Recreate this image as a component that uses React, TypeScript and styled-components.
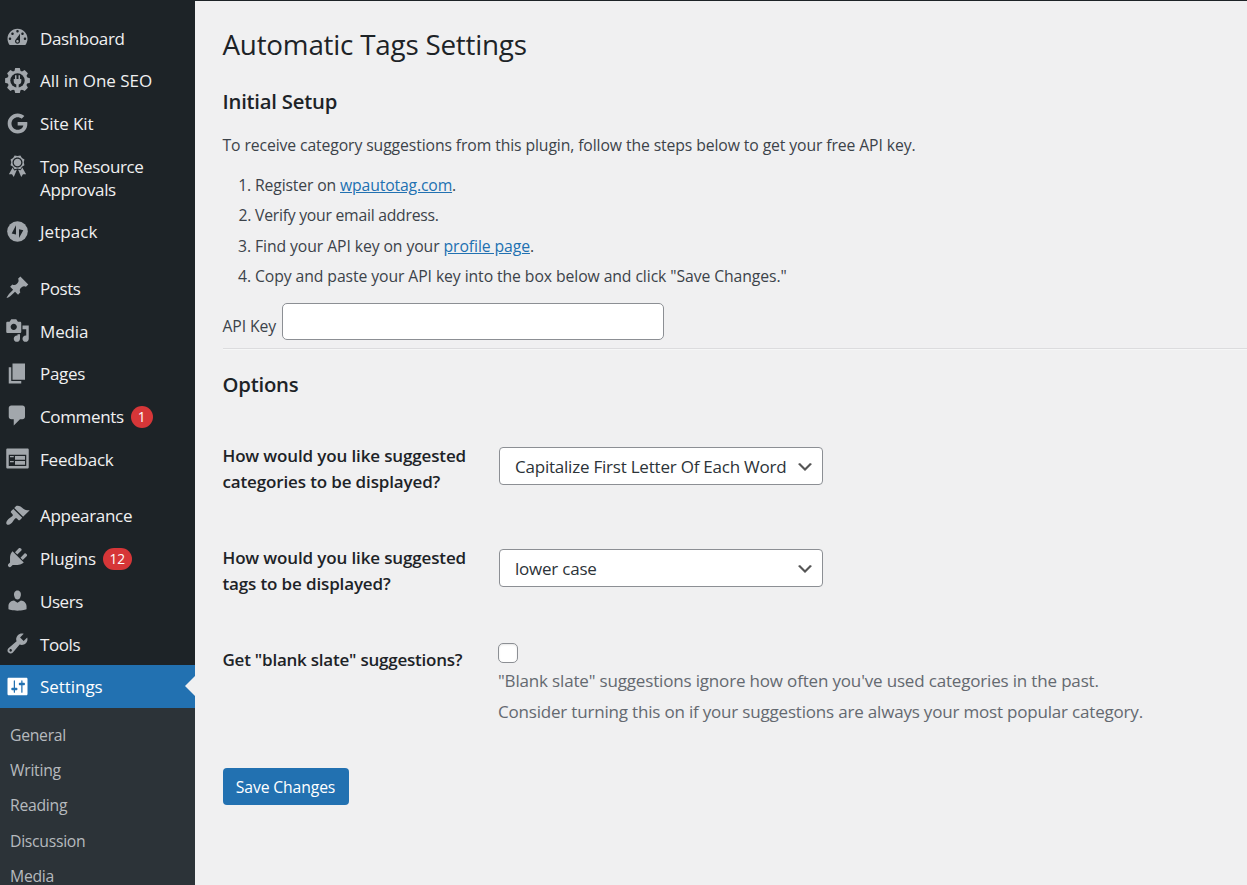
import React from "react";
import styled, { createGlobalStyle } from "styled-components";

const GlobalStyle = createGlobalStyle`
  * { box-sizing: border-box; }
  html, body { margin: 0; background: #f0f0f1; }
  body, input, select, button {
    font-family: "Segoe UI", "Open Sans", "Noto Sans", sans-serif;
  }
`;

const Page = styled.div`
  display: flex;
  height: 100vh;
  overflow: hidden;
  border-top: 1px solid #1d2327;
  background: #f0f0f1;
`;

/* ---------- sidebar ---------- */

const Sidebar = styled.nav`
  flex: 0 0 195px;
  background: #1d2327;
  padding-top: 15.25px;
`;

const MenuGroup = styled.ul`
  list-style: none;
  margin: 0 0 13.75px;
  padding: 0;

  &:last-of-type {
    margin-bottom: 0;
  }
`;

const MenuLink = styled.a<{ $current?: boolean }>`
  position: relative;
  display: flex;
  align-items: flex-start;
  min-height: 42.75px;
  padding-left: 5px;
  color: ${(p) => (p.$current ? "#fff" : "#f0f0f1")};
  background: ${(p) => (p.$current ? "#2271b1" : "transparent")};
  text-decoration: none;
`;

const CurrentArrow = styled.span`
  position: absolute;
  right: 0;
  top: 10.75px;
  border: solid transparent;
  border-width: 10px 10px 10px 0;
  border-right-color: #f0f0f1;
`;

const MenuIcon = styled.svg<{ $current?: boolean }>`
  flex: none;
  width: 25px;
  height: 25px;
  margin-top: 8.75px;
  fill: ${(p) => (p.$current ? "#fff" : "#a2a7ac")};
`;

const MenuLabel = styled.span<{ $tracking: number }>`
  max-width: 125px;
  padding: 11.4px 0 8.6px 10px;
  font-size: 17px;
  line-height: 22.75px;
  letter-spacing: ${(p) => p.$tracking}px;
`;

const Badge = styled.span`
  min-width: 22px;
  height: 22px;
  margin: 11px 0 0 7px;
  padding: 0 6.5px;
  border-radius: 11px;
  background: #d63638;
  color: #fff;
  font-size: 13.75px;
  line-height: 22px;
  text-align: center;
`;

const Submenu = styled.div`
  padding: 8.75px 0;
  background: #2c3338;
`;

const SubmenuItem = styled.a`
  display: block;
  padding: 7.5px 10px 5px;
  font-size: 15.75px;
  line-height: 22.75px;
  letter-spacing: -0.28px;
  color: #b6babe;
`;

/* ---------- content ---------- */

const Content = styled.main`
  flex: 1;
  min-width: 0;
  padding: 24px 0 0 27.5px;
  color: #3c434a;
  font-size: 15.75px;
  letter-spacing: -0.11px;
`;

const PageTitle = styled.h1`
  margin: 0;
  font-size: 27.8px;
  font-weight: 400;
  line-height: 38px;
  letter-spacing: -0.22px;
  color: #1d2327;
`;

const SectionTitle = styled.h2<{ $gap: number }>`
  margin: ${(p) => p.$gap}px 0 0;
  font-size: 20.3px;
  font-weight: 600;
  line-height: 26px;
  letter-spacing: -0.22px;
  color: #1d2327;
`;

const Intro = styled.p`
  margin: 19px 0 16px;
  line-height: 24px;
`;

const Steps = styled.ol`
  display: flex;
  flex-direction: column;
  gap: 6px;
  margin: 0;
  padding-left: 32.5px;
  line-height: 24.375px;
`;

const Step = styled.li<{ $tracking: number }>`
  letter-spacing: ${(p) => p.$tracking}px;
`;

const Link = styled.a`
  color: #2271b1;
  text-decoration: underline;
`;

const KeyRow = styled.div`
  display: flex;
  gap: 5px;
  margin-top: 14.5px;
`;

const KeyLabel = styled.label`
  width: 54.5px;
  padding-top: 11px;
  line-height: 24px;
  white-space: nowrap;
`;

const KeyInput = styled.input`
  width: 382px;
  height: 37px;
  border: 1px solid #8c8f94;
  border-radius: 5px;
  background: #fff;
  font-size: 16px;
`;

const Divider = styled.hr`
  margin: 8px 0 0;
  border: 0;
  border-top: 1px solid #dcdcde;
  border-bottom: 1px solid #f6f7f7;
`;

const Form = styled.div`
  display: flex;
  flex-direction: column;
  gap: 50px;
  margin-top: 45.5px;
`;

const FormRow = styled.div`
  display: grid;
  grid-template-columns: 275.5px 1fr;
  min-height: 52px;
`;

const FieldLabel = styled.label<{ $tracking: number }>`
  max-width: 250px;
  padding-top: 1px;
  font-size: 17px;
  font-weight: 600;
  line-height: 26px;
  height: 52px;
  letter-spacing: ${(p) => p.$tracking}px;
  color: #1d2327;
`;

const SelectBox = styled.div`
  position: relative;
  width: 324px;
  height: 38px;
  margin: 5px 0 0 1px;
`;

const Select = styled.select`
  appearance: none;
  width: 100%;
  height: 100%;
  padding: 1px 30px 0 15px;
  border: 1px solid #8c8f94;
  border-radius: 4px;
  background: #fff;
  color: #2c3338;
  font-size: 17px;
  letter-spacing: -0.22px;
`;

const Chevron = styled.svg`
  position: absolute;
  right: 8px;
  top: 10px;
  width: 20px;
  height: 20px;
  fill: #555;
  pointer-events: none;
`;

const CheckCell = styled.div`
  margin-top: -3px;
`;

const Checkbox = styled.input`
  appearance: none;
  display: block;
  width: 20px;
  height: 20px;
  margin: 0 0 2px;
  border: 1px solid #8c8f94;
  border-radius: 5px;
  background: #fff;
  box-shadow: inset 0 1px 2px rgba(0, 0, 0, 0.1);
`;

const Hint = styled.p<{ $tracking: number }>`
  margin: 0;
  font-size: 17px;
  line-height: 31px;
  letter-spacing: ${(p) => p.$tracking}px;
  color: #646970;
  white-space: nowrap;
`;

const SaveButton = styled.button`
  display: block;
  width: 126px;
  height: 37px;
  margin-top: 41px;
  padding: 1px 0 0;
  border: 0;
  border-radius: 4px;
  background: #2271b1;
  color: #fff;
  font-size: 15.75px;
  letter-spacing: -0.14px;
`;

/* ---------- icons ---------- */

const glyphs: Record<string, string> = {
  dashboard:
    "M3.76 16h12.48c1.1-1.37 1.76-3.11 1.76-5 0-4.42-3.58-8-8-8s-8 3.58-8 8c0 1.89.66 3.63 1.76 5zM10 4c.55 0 1 .45 1 1s-.45 1-1 1-1-.45-1-1 .45-1 1-1zM6 6c.55 0 1 .45 1 1s-.45 1-1 1-1-.45-1-1 .45-1 1-1zm8 0c.55 0 1 .45 1 1s-.45 1-1 1-1-.45-1-1 .45-1 1-1zm-5.37 5.55L12 7v6c0 1.1-.9 2-2 2s-2-.9-2-2c0-.57.24-1.08.63-1.45zM4 10c.55 0 1 .45 1 1s-.45 1-1 1-1-.45-1-1 .45-1 1-1zm12 0c.55 0 1 .45 1 1s-.45 1-1 1-1-.45-1-1 .45-1 1-1zm-5 3c0-.55-.45-1-1-1s-1 .45-1 1 .45 1 1 1 1-.45 1-1z",
  awards:
    "M4.46 5.16L5 7.46l-.54 2.29 2.01 1.24L7.7 13l2.3-.54 2.3.54 1.23-2.01 2.01-1.24L15 7.46l.54-2.3-2-1.24-1.24-2.01-2.3.55-2.29-.54-1.25 2zm5.55 6.34c-2.21 0-4-1.79-4-4 0-2.2 1.79-4 4-4 2.2 0 4 1.8 4 4 0 2.21-1.8 4-4 4zm-.02-1C8.33 10.5 7 9.16 7 7.5c0-1.65 1.33-3 2.99-3S13 5.85 13 7.5c0 1.66-1.35 3-3.01 3zm3.84 1.1l-1.28 2.24-2.08-.47L13 19.2l1.4-2.2h2.5zm-7.7.07l1.25 2.25 2.13-.51L7 19.2 5.6 17H3.1z",
  post: "M10.44 3.02l1.82-1.82 6.36 6.35-1.83 1.82c-1.05-.68-2.48-.57-3.41.36l-.75.75c-.92.93-1.04 2.35-.35 3.41l-1.83 1.82-2.41-2.41-2.8 2.79c-.42.42-3.38 2.71-3.8 2.29s1.86-3.39 2.28-3.81l2.79-2.79L4.1 9.36l1.83-1.82c1.05.69 2.48.57 3.4-.36l.75-.75c.93-.92 1.05-2.35.36-3.41z",
  media:
    "M13 11V4c0-.55-.45-1-1-1h-1.67L9 1H5L3.67 3H2c-.55 0-1 .45-1 1v7c0 .55.45 1 1 1h10c.55 0 1-.45 1-1zM7 4.5c1.38 0 2.5 1.12 2.5 2.5S8.38 9.5 7 9.5 4.5 8.38 4.5 7 5.62 4.5 7 4.5zM14 6h5v10.5c0 1.38-1.12 2.5-2.5 2.5S14 17.88 14 16.5s1.12-2.5 2.5-2.5c.17 0 .34.02.5.05V9h-3V6zm-4 8.05V13h2v3.5c0 1.38-1.12 2.5-2.5 2.5S7 17.88 7 16.5 8.12 14 9.5 14c.17 0 .34.02.5.05z",
  page: "M6 15V2h10v13H6zm-1 1h8v2H3V5h2v11z",
  comments:
    "M5 2h9c1.1 0 2 .9 2 2v7c0 1.1-.9 2-2 2h-2l-5 5v-5H5c-1.1 0-2-.9-2-2V4c0-1.1.9-2 2-2z",
  feedback:
    "M2 2h16c.55 0 1 .45 1 1v14c0 .55-.45 1-1 1H2c-.55 0-1-.45-1-1V3c0-.55.45-1 1-1zm15 14V7H3v9h14zM4 8v1h3V8H4zm4 0v3h8V8H8zm-4 4v1h3v-1H4zm4 0v3h8v-3H8z",
  appearance:
    "M14.48 11.06L7.41 3.99l1.5-1.5c.5-.56 2.3-.47 3.51.32 1.21.8 1.43 1.28 2.91 2.1 1.18.64 2.45 1.26 4.45.85zm-.71.71L6.7 4.7 4.93 6.47c-.39.39-.39 1.02 0 1.41l1.06 1.06c.39.39.39 1.03 0 1.42-.6.6-1.43 1.11-2.21 1.69-.35.26-.7.53-1.01.84C1.43 14.23.4 16.08 1.4 17.07c.99 1 2.84-.03 4.18-1.36.31-.31.58-.66.85-1.02.57-.78 1.08-1.61 1.69-2.21.39-.39 1.02-.39 1.41 0l1.06 1.06c.39.39 1.02.39 1.41 0z",
  plugins:
    "M13.11 4.36L9.87 7.6 8 5.73l3.24-3.24c.35-.34 1.05-.2 1.56.32.52.51.66 1.21.31 1.55zm-8 1.77l.91-1.12 9.01 9.01-1.19.84c-.71.71-2.63 1.16-3.82 1.16H6.14L4.9 17.26c-.59.59-1.54.59-2.12 0-.59-.58-.59-1.53 0-2.12l1.24-1.24v-3.88c0-1.13.4-3.19 1.09-3.89zm7.26 3.97l3.24-3.24c.34-.35 1.04-.21 1.55.31.52.51.66 1.21.31 1.55l-3.24 3.25z",
  users:
    "M10 9.25c-2.27 0-2.73-3.44-2.73-3.44C7 4.02 7.82 2 9.97 2c2.16 0 2.98 2.02 2.71 3.81 0 0-.41 3.44-2.68 3.44zm0 2.57L12.72 10c2.39 0 4.52 2.33 4.52 4.53v2.49s-3.65 1.13-7.24 1.13c-3.65 0-7.24-1.13-7.24-1.13v-2.49c0-2.25 1.94-4.48 4.47-4.48z",
  tools:
    "M16.68 9.77c-1.34 1.34-3.3 1.67-4.95.99l-5.41 6.52c-.99.99-2.59.99-3.58 0s-.99-2.59 0-3.57l6.52-5.42c-.68-1.65-.35-3.61.99-4.95 1.28-1.28 3.12-1.62 4.72-1.06l-2.89 2.89 2.82 2.82 2.86-2.87c.53 1.58.18 3.39-1.08 4.65zM3.81 16.21c.4.39 1.04.39 1.43 0 .4-.4.4-1.04 0-1.43-.39-.4-1.03-.4-1.43 0-.39.39-.39 1.03 0 1.43z",
  settings:
    "M18 16V4c0-.55-.45-1-1-1H3c-.55 0-1 .45-1 1v12c0 .55.45 1 1 1h14c.55 0 1-.45 1-1zM8 11h1c.55 0 1 .45 1 1s-.45 1-1 1H8v1.5c0 .28-.22.5-.5.5s-.5-.22-.5-.5V13H6c-.55 0-1-.45-1-1s.45-1 1-1h1V5.5c0-.28.22-.5.5-.5s.5.22.5.5V11zm5-2h-1c-.55 0-1-.45-1-1s.45-1 1-1h1V5.5c0-.28.22-.5.5-.5s.5.22.5.5V7h1c.55 0 1 .45 1 1s-.45 1-1 1h-1v5.5c0 .28-.22.5-.5.5s-.5-.22-.5-.5V9z",
};

const Glyph = ({ name, current }: { name: string; current?: boolean }) => {
  if (name === "gear") {
    return (
      <MenuIcon viewBox="-12.5 -12.5 25 25">
        {[0, 45, 90, 135].map((a) => (
          <path key={a} d="M-2.3-12.4h4.6l.9 3.4v18l-.9 3.4h-4.6l-.9-3.4v-18z" transform={`rotate(${a})`} />
        ))}
        <circle r="10.1" />
        <circle r="7.2" fill="#1d2327" />
        <path d="M-2.5-5.2h1.500v3.600h2v-3.600h1.500v3.600h1.300v2.400c0 1.800-1 2.900-2.600 3.300v3.600h-2.400v-3.600c-1.600-.4-2.600-1.500-2.600-3.300v-2.400h1.300z" />
      </MenuIcon>
    );
  }
  if (name === "google") {
    return (
      <MenuIcon viewBox="-66 -53 620 620">
        <path d="M488 261.8C488 403.3 391.1 504 248 504 110.8 504 0 393.2 0 256S110.8 8 248 8c66.8 0 123 24.5 166.3 64.9l-67.5 64.9C258.5 52.6 94.3 116.6 94.3 256c0 86.5 69.1 156.6 153.7 156.6 98.2 0 135-70.4 140.8-106.9H248v-85.3h236.1c2.3 12.7 3.9 24.9 3.9 41.4z" />
      </MenuIcon>
    );
  }
  if (name === "jetpack") {
    return (
      <MenuIcon viewBox="0 0 25 25">
        <circle cx="12.5" cy="12.5" r="10.3" />
        <path d="M11 6.2v9.4l-4.3-1zM14 18.9V10.200l4.300 1z" fill="#1d2327" />
      </MenuIcon>
    );
  }
  return (
    <MenuIcon viewBox="0 0 20 20" $current={current}>
      <path fillRule={name === "awards" ? "evenodd" : "nonzero"} d={glyphs[name]} />
    </MenuIcon>
  );
};

/* ---------- data ---------- */

type Item = { icon: string; label: string; tracking: number; badge?: string; current?: boolean };

const groups: Item[][] = [
  [
    { icon: "dashboard", label: "Dashboard", tracking: -0.35 },
    { icon: "gear", label: "All in One SEO", tracking: -0.02 },
    { icon: "google", label: "Site Kit", tracking: -0.12 },
    { icon: "awards", label: "Top Resource Approvals", tracking: -0.36 },
    { icon: "jetpack", label: "Jetpack", tracking: 0.05 },
  ],
  [
    { icon: "post", label: "Posts", tracking: -0.45 },
    { icon: "media", label: "Media", tracking: -0.15 },
    { icon: "page", label: "Pages", tracking: -0.3 },
    { icon: "comments", label: "Comments", tracking: -0.35, badge: "1" },
    { icon: "feedback", label: "Feedback", tracking: -0.2 },
  ],
  [
    { icon: "appearance", label: "Appearance", tracking: -0.28 },
    { icon: "plugins", label: "Plugins", tracking: -0.15, badge: "12" },
    { icon: "users", label: "Users", tracking: -0.45 },
    { icon: "tools", label: "Tools", tracking: -0.4 },
    { icon: "settings", label: "Settings", tracking: -0.05, current: true },
  ],
];

const submenu = ["General", "Writing", "Reading", "Discussion", "Media"];

const SelectField = ({ id, value }: { id: string; value: string }) => (
  <SelectBox>
    <Select id={id} defaultValue={value}>
      <option>{value}</option>
    </Select>
    <Chevron viewBox="0 0 20 20">
      <path d="M5 6l5 5 5-5 2 1-7 7-7-7 2-1z" />
    </Chevron>
  </SelectBox>
);

export default function App() {
  return (
    <>
      <GlobalStyle />
      <Page>
        <Sidebar>
          {groups.map((items, i) => (
            <MenuGroup key={i}>
              {items.map((item) => (
                <li key={item.label}>
                  <MenuLink $current={item.current}>
                    <Glyph name={item.icon} current={item.current} />
                    <MenuLabel $tracking={item.tracking}>{item.label}</MenuLabel>
                    {item.badge && <Badge>{item.badge}</Badge>}
                    {item.current && <CurrentArrow />}
                  </MenuLink>
                </li>
              ))}
            </MenuGroup>
          ))}
          <Submenu>
            {submenu.map((s) => (
              <SubmenuItem key={s}>{s}</SubmenuItem>
            ))}
          </Submenu>
        </Sidebar>
        <Content>
          <PageTitle>Automatic Tags Settings</PageTitle>
          <SectionTitle $gap={25}>Initial Setup</SectionTitle>
          <Intro>
            To receive category suggestions from this plugin, follow the steps below to get your free API key.
          </Intro>
          <Steps>
            <Step $tracking={-0.15}>
              Register on <Link>wpautotag.com</Link>.
            </Step>
            <Step $tracking={-0.25}>Verify your email address.</Step>
            <Step $tracking={-0.09}>
              Find your API key on your <Link>profile page</Link>.
            </Step>
            <Step $tracking={-0.09}>
              Copy and paste your API key into the box below and click "Save Changes."
            </Step>
          </Steps>
          <KeyRow>
            <KeyLabel htmlFor="api-key">API Key</KeyLabel>
            <KeyInput id="api-key" type="text" />
          </KeyRow>
          <Divider />
          <SectionTitle $gap={20.5}>Options</SectionTitle>
          <Form>
            <FormRow>
              <FieldLabel htmlFor="categories" $tracking={-0.14}>
                How would you like suggested categories to be displayed?
              </FieldLabel>
              <SelectField id="categories" value="Capitalize First Letter Of Each Word" />
            </FormRow>
            <FormRow>
              <FieldLabel htmlFor="tags" $tracking={-0.14}>
                How would you like suggested tags to be displayed?
              </FieldLabel>
              <SelectField id="tags" value="lower case" />
            </FormRow>
            <FormRow>
              <FieldLabel htmlFor="blank-slate" $tracking={-0.23}>
                Get "blank slate" suggestions?
              </FieldLabel>
              <CheckCell>
                <Checkbox id="blank-slate" type="checkbox" />
                <Hint $tracking={-0.17}>
                  "Blank slate" suggestions ignore how often you've used categories in the past.
                </Hint>
                <Hint $tracking={-0.19}>
                  Consider turning this on if your suggestions are always your most popular category.
                </Hint>
              </CheckCell>
            </FormRow>
          </Form>
          <SaveButton type="button">Save Changes</SaveButton>
        </Content>
      </Page>
    </>
  );
}
